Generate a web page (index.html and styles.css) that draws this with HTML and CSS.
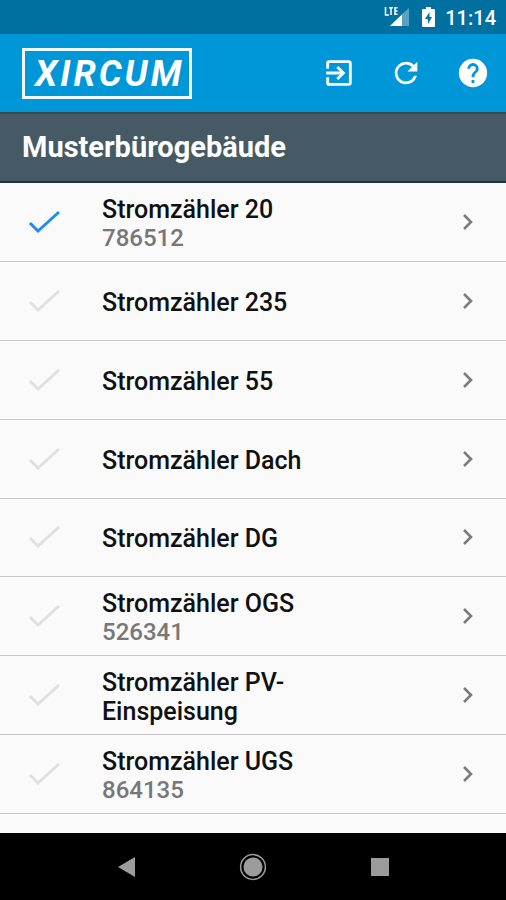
FILE: index.html
```
<!DOCTYPE html>
<html lang="de">
<head>
<meta charset="utf-8">
<meta name="viewport" content="width=device-width, initial-scale=1">
<title>XIRCUM</title>
<link rel="stylesheet" href="styles.css">
</head>
<body>

<!-- shared row icons -->
<svg class="sprite" aria-hidden="true">
<symbol id="check" viewBox="0 0 32 24"><path d="M2 13l8 8L31 2" fill="none" stroke="currentColor" stroke-width="3"/></symbol>
<symbol id="chevron" viewBox="0 0 12 18"><path d="M2 2l7 7-7 7" fill="none" stroke="currentColor" stroke-width="2.6"/></symbol>
</svg>

<div class="statusbar">
<svg class="signal" viewBox="0 0 26 22" aria-hidden="true">
<path d="M1.500 1v8H5M5 1.700h4M7 1.700V9M13.500 1.700H11v6.600h2.500M11 5h2.500" fill="none" stroke="#fff" stroke-width="1.500"/>
<path d="M25 2v18H6l9-9h2V9z" fill="#fff" opacity=".35"/>
<path d="M18 8.500V20H6z" fill="#fff"/>
</svg>
<svg class="battery" viewBox="0 0 13 22" aria-hidden="true">
<path d="M4 1h5v2h3q1 0 1 1v16q0 1-1 1H1q-1 0-1-1V4q0-1 1-1h3z" fill="#fff"/>
<path d="M7.500 6L3 13h3v5l4-7H7.500z" fill="#0070a0"/>
</svg>
<span class="clock">11:14</span>
</div>

<header class="toolbar">
<a class="logo" href="#">XIRCUM</a>
<div class="actions">
<button type="button" aria-label="Abmelden">
<svg class="icon" viewBox="0 0 24 24"><path fill="currentColor" d="M10.090 15.590L11.500 17l5-5-5-5-1.410 1.410L12.670 11H3v2h9.670l-2.580 2.590zM19 3H5a2 2 0 0 0-2 2v4h2V5h14v14H5v-4H3v4a2 2 0 0 0 2 2h14c1.100 0 2-.9 2-2V5c0-1.100-.9-2-2-2z"/></svg>
</button>
<button type="button" aria-label="Aktualisieren">
<svg class="icon" viewBox="0 0 24 24"><path fill="currentColor" d="M17.650 6.350A7.958 7.958 0 0 0 12 4a8 8 0 1 0 7.730 10h-2.080A5.990 5.990 0 0 1 12 18a6 6 0 1 1 4.220-10.220L13 11h7V4l-2.350 2.350z"/></svg>
</button>
<button type="button" aria-label="Hilfe">
<svg class="icon" viewBox="0 0 24 24"><path fill="currentColor" d="M12 2a10 10 0 1 0 0 20 10 10 0 0 0 0-20zm1 17h-2v-2h2v2zm2.070-7.750l-.9.920C13.450 12.900 13 13.500 13 15h-2v-.5c0-1.100.450-2.100 1.170-2.830l1.240-1.260c.370-.360.590-.860.590-1.410a2 2 0 1 0-4 0H8a4 4 0 1 1 8 0c0 .880-.360 1.680-.930 2.250z"/></svg>
</button>
</div>
</header>

<h1 class="building">Musterbürogebäude</h1>

<main class="meters">
<a class="meter" href="#"><svg class="check done"><use href="#check"/></svg><span class="label"><b>Stromzähler 20</b><small>786512</small></span><svg class="chevron"><use href="#chevron"/></svg></a>
<a class="meter" href="#"><svg class="check"><use href="#check"/></svg><span class="label"><b>Stromzähler 235</b></span><svg class="chevron"><use href="#chevron"/></svg></a>
<a class="meter" href="#"><svg class="check"><use href="#check"/></svg><span class="label"><b>Stromzähler 55</b></span><svg class="chevron"><use href="#chevron"/></svg></a>
<a class="meter" href="#"><svg class="check"><use href="#check"/></svg><span class="label"><b>Stromzähler Dach</b></span><svg class="chevron"><use href="#chevron"/></svg></a>
<a class="meter" href="#"><svg class="check"><use href="#check"/></svg><span class="label"><b>Stromzähler DG</b></span><svg class="chevron"><use href="#chevron"/></svg></a>
<a class="meter" href="#"><svg class="check"><use href="#check"/></svg><span class="label"><b>Stromzähler OGS</b><small>526341</small></span><svg class="chevron"><use href="#chevron"/></svg></a>
<a class="meter" href="#"><svg class="check"><use href="#check"/></svg><span class="label"><b>Stromzähler PV-<br>Einspeisung</b></span><svg class="chevron"><use href="#chevron"/></svg></a>
<a class="meter" href="#"><svg class="check"><use href="#check"/></svg><span class="label"><b>Stromzähler UGS</b><small>864135</small></span><svg class="chevron"><use href="#chevron"/></svg></a>
</main>

<nav class="navbar">
<button type="button" aria-label="Zurück"><svg class="navicon" viewBox="0 0 28 28"><path d="M6 14l17-10v20z" fill="#9c9c9c"/></svg></button>
<button type="button" aria-label="Startseite"><svg class="navicon" viewBox="0 0 28 28"><circle cx="14" cy="14" r="12.400" fill="none" stroke="#9c9c9c" stroke-width="1.500"/><circle cx="14" cy="14" r="9.500" fill="#9c9c9c"/></svg></button>
<button type="button" aria-label="Übersicht"><svg class="navicon" viewBox="0 0 28 28"><path d="M5 5h18v18H5z" fill="#9c9c9c"/></svg></button>
</nav>

</body>
</html>
```
FILE: styles.css
```
* {
	box-sizing: border-box;
}

body {
	margin: 0;
	min-height: 100vh;
	display: flex;
	flex-direction: column;
	background: #fafafa;
	font-family: Roboto, "Liberation Sans", sans-serif;
}

button {
	padding: 0;
	border: 0;
	background: none;
	color: inherit;
}

svg {
	display: block;
	flex: none;
}

.sprite {
	display: none;
}

.statusbar {
	display: flex;
	align-items: center;
	justify-content: flex-end;
	height: 34px;
	padding: 0 10px;
	background: #0070a0;
	color: #fff;
}

.signal {
	width: 26px;
	height: 22px;
	margin-right: 12px;
}

.battery {
	width: 13px;
	height: 22px;
	margin-right: 10px;
}

.clock {
	padding-top: 2px;
	font-size: 20px;
	font-weight: 500;
}

.toolbar {
	display: flex;
	align-items: center;
	justify-content: space-between;
	height: 78px;
	padding: 0 16px 0 22px;
	background: #0097d8;
	color: #fff;
}

.logo {
	padding: 2px 5px 0 10px;
	border: 3px solid #f0f8fc;
	color: #fff;
	font-size: 36px;
	font-weight: 700;
	font-style: italic;
	letter-spacing: 3px;
	line-height: 43px;
	text-decoration: none;
}

.actions {
	display: flex;
	gap: 33px;
}

.icon {
	width: 34px;
	height: 34px;
}

.building {
	margin: 0;
	padding: 0 22px;
	border-top: 2px solid #3a4b4f;
	border-bottom: 2px solid #17364a;
	background: #455a64;
	color: #fff;
	font-size: 29px;
	font-weight: 700;
	line-height: 67px;
}

.meters {
	flex: 1;
	display: grid;
	grid-auto-rows: 1fr;
	padding-bottom: 19px;
}

.meter {
	display: flex;
	align-items: center;
	padding: 0 32px 0 28px;
	border-bottom: 1px solid #c6c8c8;
	color: #111;
	text-decoration: none;
}

.check {
	width: 32px;
	height: 24px;
	margin-right: 42px;
	color: #e0e0e0;
}

.done {
	color: #1e8cf0;
}

.label {
	flex: 1;
	padding-top: 3px;
	font-size: 25px;
	line-height: 29px;
}

.label b {
	display: block;
	font-weight: 500;
}

.label small {
	display: block;
	color: #777;
	font-size: 24px;
	font-weight: 500;
	line-height: 28px;
}

.chevron {
	width: 12px;
	height: 18px;
	color: #7c7c7c;
}

.navbar {
	display: flex;
	align-items: center;
	justify-content: center;
	gap: 99px;
	height: 67px;
	background: #000;
}

.navicon {
	width: 28px;
	height: 28px;
}
```
